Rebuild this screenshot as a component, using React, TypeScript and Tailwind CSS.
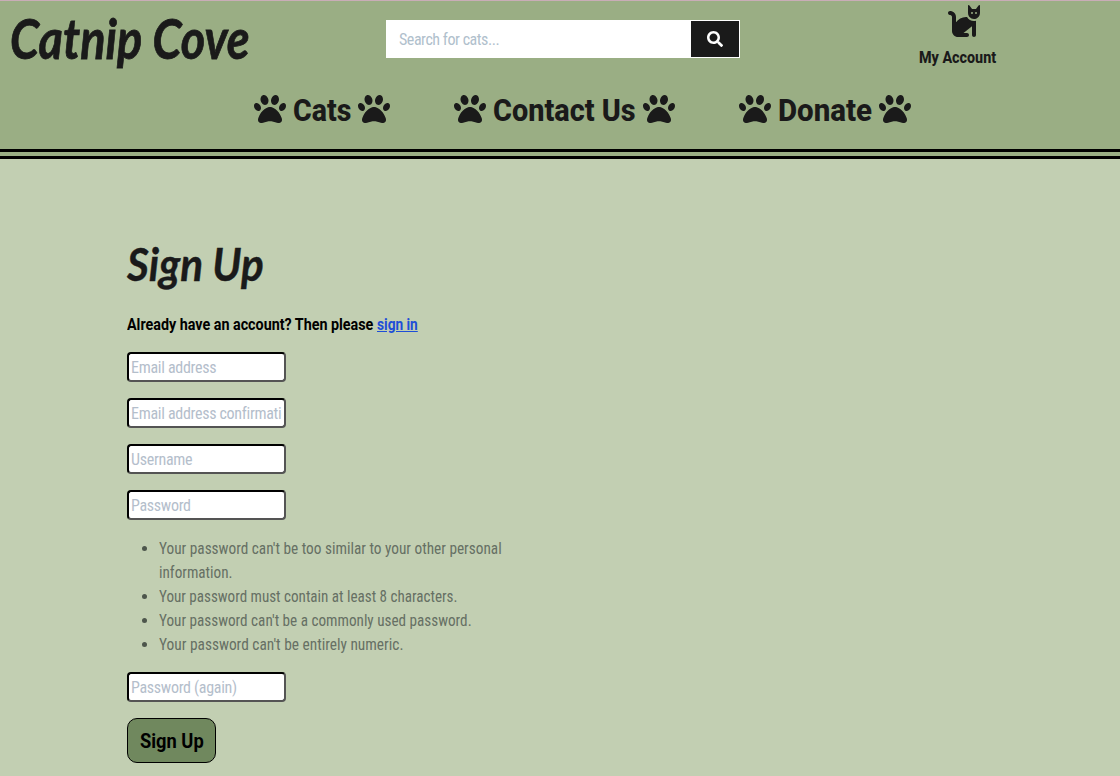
import { useLayoutEffect, useRef, type ReactNode } from "react";
import { FaCat, FaPaw } from "react-icons/fa6";
import { FaSearch } from "react-icons/fa";

/* Condenses or widens a single line of text to a set width. */
function Fit({ width, className = "", children }: { width: number; className?: string; children: ReactNode }) {
  const ref = useRef<HTMLSpanElement>(null);
  useLayoutEffect(() => {
    const el = ref.current;
    if (el) el.style.transform = `scaleX(${width / el.offsetWidth})`;
  }, [width]);
  return (
    <span className="inline-block whitespace-nowrap" style={{ width }}>
      <span ref={ref} className={`inline-block origin-left ${className}`}>
        {children}
      </span>
    </span>
  );
}

function NavLink({ label, width }: { label: string; width: number }) {
  return (
    <a href="#" className="flex h-12 items-center gap-[7px] text-[32px] leading-[48px] font-extrabold">
      <FaPaw className="size-8" />
      <span className="h-12 pt-px">
        <Fit width={width}>{label}</Fit>
      </span>
      <FaPaw className="size-8" />
    </a>
  );
}

function Field({ label, type = "text" }: { label: string; type?: string }) {
  return (
    <input
      type={type}
      placeholder={label}
      className="block h-[30px] w-[159px] rounded border-2 border-black bg-white px-[2px] py-px text-base font-normal tracking-[-0.3px] [border-style:inset] [font-stretch:82%] placeholder:text-[#b4becb]"
    />
  );
}

export default function App() {
  return (
    <div className="h-[776px] overflow-hidden bg-[#c2cfb2] font-['Roboto','Liberation_Sans',sans-serif] text-base text-[#1a1a1a]">
      <header className="h-[159px] border-t border-b-[10px] border-t-[#c9adb7] border-b-black bg-[#9aae84] [border-bottom-style:double]">
        <div className="flex h-[84px] items-start">
          <a href="#" className="ml-[10px] w-[376px] font-['Lato',cursive] text-[56px] leading-[74px] font-bold italic [-webkit-text-stroke:0.8px_#1a1a1a]">
            <Fit width={240}>Catnip Cove</Fit>
          </a>
          <form className="mt-[19px] flex h-[38px] w-[354px] bg-white">
            <input
              placeholder="Search for cats..."
              className="w-[305px] px-[13px] pt-[2px] text-base font-normal tracking-[-0.45px] [font-stretch:82%] placeholder:text-[#b0c0cc]"
            />
            <button type="button" className="my-px flex w-12 items-center justify-center bg-[#1a1a1a] text-white">
              <FaSearch className="size-4" />
            </button>
          </form>
          <a href="#" className="ml-[178px] flex w-[78px] flex-col items-center pt-[4px] font-extrabold">
            <FaCat className="ml-[13px] h-8 w-9" />
            <span className="mt-[9px] leading-6">
              <Fit width={77}>My Account</Fit>
            </span>
          </a>
        </div>
        <nav className="flex gap-16 pl-[254px]">
          <NavLink label="Cats" width={58} />
          <NavLink label="Contact Us" width={142.5} />
          <NavLink label="Donate" width={94} />
        </nav>
      </header>

      <main className="w-[520px] pt-[72px] pl-[127px]">
        <h1 className="h-[72px] font-['Lato',cursive] text-[45px] leading-[67px] font-bold italic [-webkit-text-stroke:0.4px_#1a1a1a]">
          <Fit width={137}>Sign Up</Fit>
        </h1>
        <p className="mt-[10px] h-6 leading-6 font-bold whitespace-nowrap text-black">
          <Fit width={246}>Already have an account? Then please</Fit>
          <a href="#" className="ml-[4px] text-[#1d4ed8] underline">
            <Fit width={41} className="underline">sign in</Fit>
          </a>
        </p>
        <form className="mt-[15px] flex flex-col items-start gap-4">
          <Field label="Email address" />
          <Field label="Email address confirmation" />
          <Field label="Username" />
          <Field label="Password" type="password" />
          <ul className="mt-px -mb-px list-disc pl-8 leading-6 font-normal text-[#667064] marker:text-[#4d564c] [font-stretch:85%]">
            <li>
              <Fit width={343}>Your password can't be too similar to your other personal</Fit>
              <br />
              <Fit width={74}>information.</Fit>
            </li>
            <li><Fit width={298}>Your password must contain at least 8 characters.</Fit></li>
            <li><Fit width={313}>Your password can't be a commonly used password.</Fit></li>
            <li><Fit width={244}>Your password can't be entirely numeric.</Fit></li>
          </ul>
          <Field label="Password (again)" type="password" />
          <button type="button" className="h-[45px] w-[89px] rounded-[10px] border border-black bg-[#70885e] text-xl font-bold text-black">
            <Fit width={64}>Sign Up</Fit>
          </button>
        </form>
      </main>
    </div>
  );
}
